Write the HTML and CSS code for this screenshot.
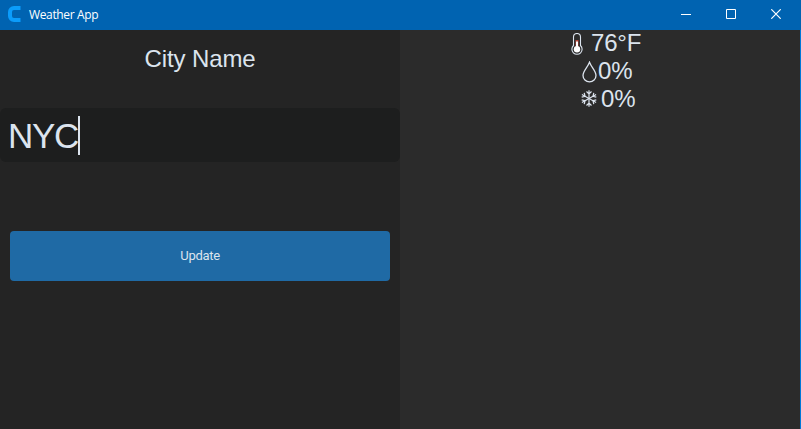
FILE: index.html
```html
<!DOCTYPE html>
<html lang="en">
<head>
<meta charset="utf-8">
<title>Weather App</title>
<link rel="stylesheet" href="styles.css">
</head>
<body>
<div class="window">
  <header class="titlebar">
    <svg class="logo" width="14" height="16" viewBox="0 0 14 16"><path d="M12.500 2H6a4 4 0 0 0-4 4v4a4 4 0 0 0 4 4h6.500" fill="none" stroke="#0b9cfb" stroke-width="4"/></svg>
    <span class="title">Weather App</span>
    <div class="controls">
      <svg width="10" height="10" viewBox="0 0 10 10"><path d="M0 5.500h10"/></svg>
      <svg width="10" height="10" viewBox="0 0 10 10"><path d="M.5.500h9v9h-9z"/></svg>
      <svg width="10" height="10" viewBox="0 0 10 10"><path d="M.3.300l9.400 9.400M9.700.300.300 9.700" stroke-width="1.200"/></svg>
    </div>
  </header>
  <main class="content">
    <section class="form">
      <div class="label">City Name</div>
      <div class="entry"><span class="value">NYC</span><span class="caret"></span></div>
      <button class="update">Update</button>
    </section>
    <section class="report">
      <div class="reading temp">
        <svg width="12" height="22" viewBox="0 0 12 22" fill="none" stroke="#dce4ee" stroke-width="1.100"><path d="M2.500 12.500V4a3.500 3.500 0 0 1 7 0v8.500a5.100 5.100 0 1 1-7 0z"/><path d="M6 7v7" stroke="#b5473c" stroke-width="3"/><circle cx="6" cy="16.200" r="3.200" fill="#fff" stroke="none"/><path d="M6 8.500v7" stroke="#fff" stroke-width="2"/></svg>
        <span>76°F</span>
      </div>
      <div class="reading rain">
        <svg width="15" height="22" viewBox="0 0 15 22" fill="none" stroke="#dce4ee" stroke-width="1.300"><path d="M7.500 1.200C5.500 6.500 1 10 1 14.500a6.500 6.300 0 0 0 13 0C14 10 9.500 6.500 7.500 1.200z"/></svg>
        <span>0%</span>
      </div>
      <div class="reading snow">
        <svg width="16" height="17" viewBox="0 0 16 17" fill="none" stroke="#dce4ee" stroke-width="1.200"><path d="M8 .3v16.400M5.500 1.500 8 4l2.500-2.500M5.500 15.500 8 13l2.500 2.500"/><path transform="rotate(60 8 8.500)" d="M8 .3v16.400M5.500 1.500 8 4l2.500-2.500M5.500 15.500 8 13l2.500 2.500"/><path transform="rotate(120 8 8.500)" d="M8 .3v16.400M5.500 1.500 8 4l2.500-2.500M5.500 15.500 8 13l2.500 2.500"/></svg>
        <span>0%</span>
      </div>
    </section>
  </main>
</div>
</body>
</html>
```
FILE: styles.css
```css
* { box-sizing: border-box; }
body { margin: 0; background: #242424; overflow: hidden; }
.window {
  display: flex;
  flex-direction: column;
  width: 801px;
  height: 429px;
  border-right: 1px solid #0078d7;
  color: #dce4ee;
  font-family: "Liberation Sans", Arial, sans-serif;
}
.titlebar {
  display: flex;
  align-items: center;
  flex: 0 0 30px;
  margin-right: -1px;
  padding: 0 20px 2px 8px;
  background: #0063b1;
}
.title {
  margin: 2px 0 0 7px;
  color: #fff;
  font: 12px/16px "Open Sans", sans-serif;
  letter-spacing: -0.35px;
}
.controls {
  display: flex;
  gap: 35px;
  margin-left: auto;
}
.controls svg { fill: none; stroke: #fff; }
.content { display: flex; flex: 1; }
.form {
  width: 400px;
  padding-top: 14px;
  background: #242424;
}
.label {
  height: 30px;
  font-size: 24px;
  line-height: 30px;
  text-align: center;
  letter-spacing: -0.1px;
}
.entry {
  display: flex;
  align-items: center;
  height: 54px;
  margin-top: 34px;
  padding-left: 8px;
  border-radius: 6px;
  background: #1d1e1e;
  font-size: 35px;
}
.value {
  width: 70px;
  padding-top: 2px;
  letter-spacing: -1.3px;
}
.caret { width: 2px; height: 39px; margin-top: 1px; background: #dce4ee; }
.update {
  display: block;
  width: 380px;
  height: 50px;
  margin: 69px 10px 0;
  padding: 0;
  border: 0;
  border-radius: 4px;
  background: #1f6aa5;
  color: #dce4ee;
  font: 13px/20px Roboto, sans-serif;
  letter-spacing: -0.3px;
}
.report { flex: 1; background: #2b2b2b; }
.reading {
  display: flex;
  align-items: center;
  height: 28px;
  font-size: 24px;
  line-height: 27px;
  letter-spacing: -0.2px;
}
.reading span { margin-top: -4px; }
.temp { padding-left: 171px; gap: 8px; }
.rain { padding-left: 182px; gap: 1px; }
.snow { padding-left: 181px; gap: 4px; }
.rain svg, .snow svg { margin-top: -1px; }
.snow svg { margin-top: -3px; }
```
